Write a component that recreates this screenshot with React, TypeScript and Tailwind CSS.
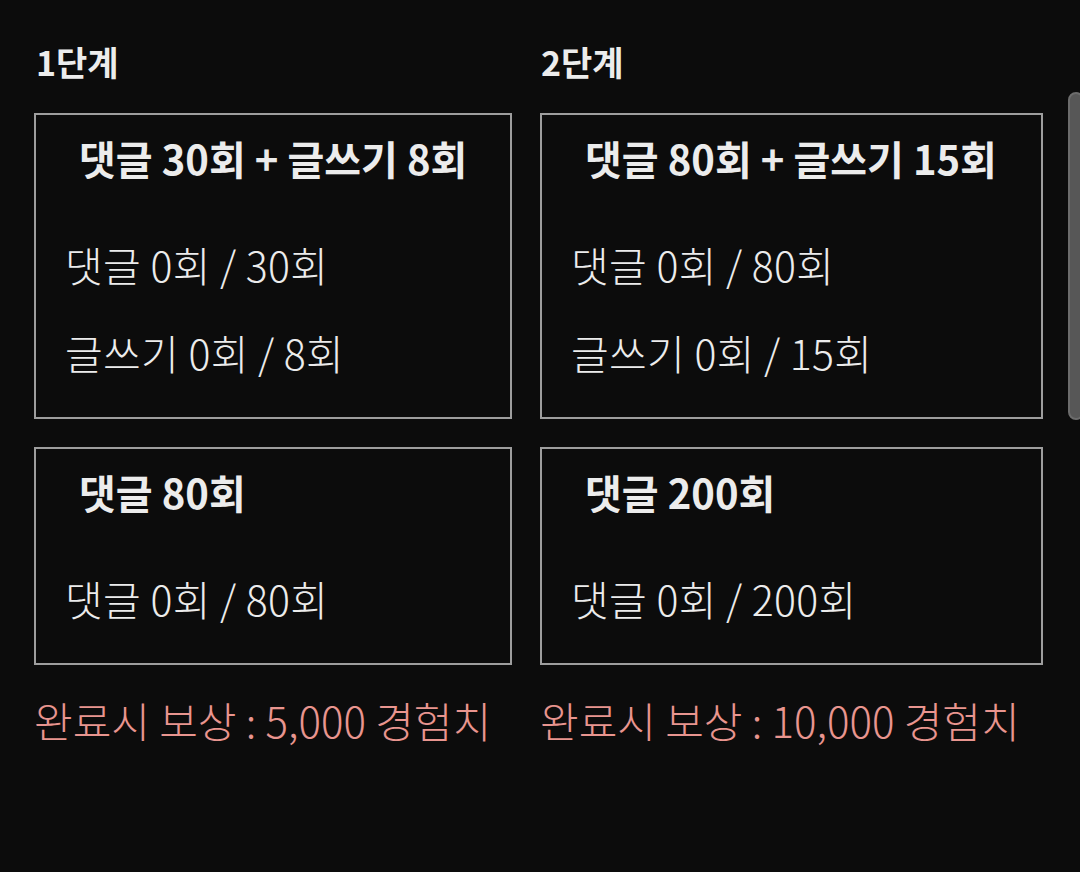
import React from "react";

const font = { fontFamily: '"Noto Sans CJK KR", "Noto Sans", sans-serif' };

function Box({ title, lines, w }: { title: string; lines: string[]; w: string }) {
  return (
    <div className={`border-2 border-[#9e9e9e] pt-[15px] pb-[21px] ${w}`}>
      <div className="h-[56px] leading-[56px] pl-[43px] text-[40px] font-bold text-[#ececec] whitespace-nowrap">{title}</div>
      <div className="mt-[34px]">
        {lines.map((l) => (
          <div key={l} className="h-[88px] leading-[88px] pl-[29px] text-[41px] font-light tracking-[0.3px] text-[#ececec] whitespace-nowrap">
            {l}
          </div>
        ))}
      </div>
    </div>
  );
}

export default function App() {
  return (
    <div className="relative w-[1080px] h-[872px] bg-[#0c0c0c] overflow-hidden" style={font}>
      <div className="absolute right-[-4px] top-[92px] h-[328px] w-[16px] rounded-[10px] bg-[#575757] border-2 border-[#6c6c6c]" />
      <div className="flex gap-[28px] pl-[34px] pt-[37px]">
        <div className="flex flex-col w-[478px]">
          <div className="h-[50px] leading-[50px] pl-[2px] text-[34px] font-bold text-[#ececec]">1단계</div>
          <div className="h-[26px]" />
          <Box w="w-[478px]" title="댓글 30회 + 글쓰기 8회" lines={["댓글 0회 / 30회", "글쓰기 0회 / 8회"]} />
          <div className="h-[28px]" />
          <Box w="w-[478px]" title="댓글 80회" lines={["댓글 0회 / 80회"]} />
          <div className="mt-[29px] h-[52px] leading-[52px] text-[42px] font-light text-[#e9958f] whitespace-nowrap">완료시 보상 : 5,000 경험치</div>
        </div>
        <div className="flex flex-col w-[503px]">
          <div className="h-[50px] leading-[50px] pl-[1px] text-[34px] font-bold text-[#ececec]">2단계</div>
          <div className="h-[26px]" />
          <Box w="w-[503px]" title="댓글 80회 + 글쓰기 15회" lines={["댓글 0회 / 80회", "글쓰기 0회 / 15회"]} />
          <div className="h-[28px]" />
          <Box w="w-[503px]" title="댓글 200회" lines={["댓글 0회 / 200회"]} />
          <div className="mt-[29px] h-[52px] leading-[52px] text-[42px] font-light text-[#e9958f] whitespace-nowrap">완료시 보상 : 10,000 경험치</div>
        </div>
      </div>
    </div>
  );
}
